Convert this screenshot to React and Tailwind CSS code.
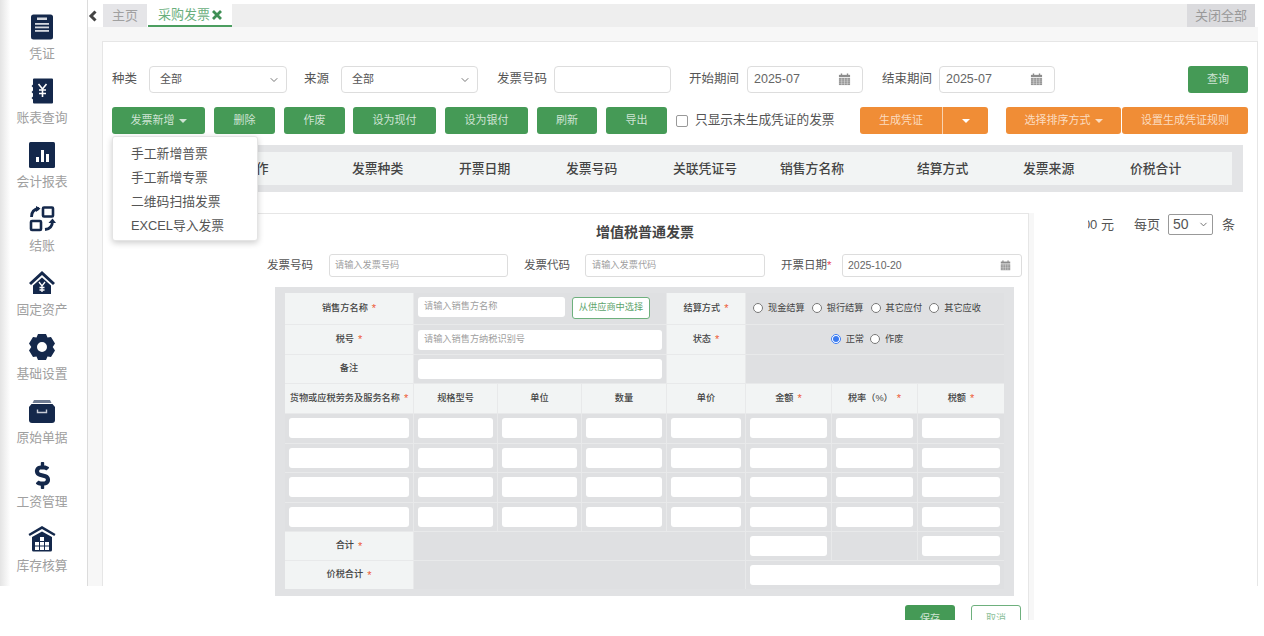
import { ChevronDown } from "lucide-react";
import { FaDollarSign } from "react-icons/fa";

const navy = "#14284b";

const VoucherIcon = () => (
  <svg width="28" height="28" viewBox="0 0 28 28">
    <rect x="3" y="1.500" width="22" height="25" rx="2.500" fill={navy} />
    <rect x="9" y="4.500" width="10" height="2.500" fill="#d5d9e0" />
    <rect x="7" y="10" width="14" height="1.800" fill="#d5d9e0" />
    <rect x="7" y="13.500" width="14" height="1.800" fill="#d5d9e0" />
    <rect x="7" y="17" width="14" height="1.800" fill="#d5d9e0" />
  </svg>
);

const LedgerIcon = () => (
  <svg width="28" height="28" viewBox="0 0 28 28">
    <path d="M6 1.500h18a1 1 0 0 1 1 1v23a1 1 0 0 1-1 1H6a1 1 0 0 1-1-1v-3l-1.500-1.500L5 19.500v-3l-1.500-1.500L5 13.500v-3L3.500 9 5 7.500v-5a1 1 0 0 1 1-1z" fill={navy} />
    <path d="M10.500 7l4 5 4-5M14.500 12v8M11 13h7M11 16.500h7" stroke="#fff" strokeWidth="1.600" fill="none" />
  </svg>
);

const ReportIcon = () => (
  <svg width="28" height="28" viewBox="0 0 28 28">
    <rect x="1" y="1" width="26" height="26" rx="1.500" fill={navy} />
    <rect x="8" y="16" width="3" height="5" fill="#fff" />
    <rect x="13" y="9" width="3" height="12" fill="#fff" />
    <rect x="18" y="13" width="3" height="8" fill="#fff" />
  </svg>
);

const CloseIcon = () => (
  <svg width="28" height="28" viewBox="0 0 28 28">
    <rect x="15" y="2.500" width="10" height="9" rx="1" fill="none" stroke={navy} strokeWidth="2.600" />
    <rect x="3" y="16" width="10" height="9" rx="1" fill="none" stroke={navy} strokeWidth="2.600" />
    <path d="M11 3.500C6 4 3.500 6.500 3.500 12" fill="none" stroke={navy} strokeWidth="2.800" />
    <path d="M8 1l4.500 2.500L8 7z" fill={navy} />
    <path d="M17 24.500c5-.5 7.500-3 7.500-8.500" fill="none" stroke={navy} strokeWidth="2.800" />
    <path d="M20.500 18L24.500 13.500 28 18z" fill={navy} />
  </svg>
);

const AssetIcon = () => (
  <svg width="28" height="28" viewBox="0 0 28 28">
    <path d="M14 2L1 14l2 2L14 6l11 10 2-2z" fill={navy} />
    <path d="M14 8.500L5 16.500V25h18v-8.500z" fill={navy} />
    <path d="M11 13l3 4 3-4M14 17v6M11.500 18.500h5M11.500 21h5" stroke="#fff" strokeWidth="1.300" fill="none" />
  </svg>
);

const GearIcon = () => (
  <svg width="28" height="28" viewBox="0 0 28 28">
    <path fillRule="evenodd" fill={navy} d="M10 1h8l1.500 3.500 3.500-.5 4 6.500-2.300 3.500 2.300 3.500-4 6.500-3.500-.5L18 27h-8l-1.500-3.500-3.500.5-4-6.500L3.300 14 1 10.500 5 4l3.500.5zM14 9a5 5 0 1 0 0 10 5 5 0 0 0 0-10z" />
  </svg>
);

const ArchiveIcon = () => (
  <svg width="28" height="28" viewBox="0 0 28 28">
    <path d="M6 3h16l1.500 3h-19z" fill="#6f7c93" />
    <path d="M3.500 7h21l2.500 3v13a3 3 0 0 1-3 3H4a3 3 0 0 1-3-3V10z" fill={navy} />
    <path d="M9.500 12.500v3h9v-3" fill="none" stroke="#c7ccd6" strokeWidth="1.400" />
  </svg>
);

const WarehouseIcon = () => (
  <svg width="28" height="28" viewBox="0 0 28 28">
    <path d="M14 1L0.500 9l1.200 2L14 4l12.300 7 1.200-2z" fill={navy} />
    <path d="M14 6.500L4 12v13a1.500 1.500 0 0 0 1.500 1.500h17A1.500 1.500 0 0 0 24 25V12z" fill={navy} />
    <rect x="12" y="12" width="4" height="4" fill="#fff" />
    <rect x="7" y="17" width="4" height="3.500" fill="#fff" />
    <rect x="12" y="17" width="4" height="3.500" fill="#fff" />
    <rect x="17" y="17" width="4" height="3.500" fill="#fff" />
    <rect x="7" y="21.500" width="4" height="3.500" fill="#fff" />
    <rect x="12" y="21.500" width="4" height="3.500" fill="#fff" />
    <rect x="17" y="21.500" width="4" height="3.500" fill="#fff" />
  </svg>
);

const DollarIcon = () => <FaDollarSign size={27} color={navy} />;

const CalendarIcon = ({ size = 13 }) => (
  <svg width={size} height={size} viewBox="0 0 14 14" fill="#8d8d8d">
    <rect x="3" y="0.500" width="1.500" height="2.500" />
    <rect x="9.500" y="0.500" width="1.500" height="2.500" />
    <rect x="1" y="2" width="12" height="2.500" />
    <path d="M1 5.500h12V13H1z" />
    <path d="M1 7.500h12M1 9.500h12M1 11.500h12M4 5.500V13M7 5.500V13M10 5.500V13" stroke="#fff" strokeWidth="0.400" />
  </svg>
);

const Caret = () => <span className="inline-block h-0 w-0 border-x-[4px] border-t-[4px] border-x-transparent border-t-current" />;

const sideItems = [
  { label: "凭证", Icon: VoucherIcon },
  { label: "账表查询", Icon: LedgerIcon },
  { label: "会计报表", Icon: ReportIcon },
  { label: "结账", Icon: CloseIcon },
  { label: "固定资产", Icon: AssetIcon },
  { label: "基础设置", Icon: GearIcon },
  { label: "原始单据", Icon: ArchiveIcon },
  { label: "工资管理", Icon: DollarIcon },
  { label: "库存核算", Icon: WarehouseIcon },
];

const headCols = ["操作", "发票种类", "开票日期", "发票号码", "关联凭证号", "销售方名称", "结算方式", "发票来源", "价税合计"];

function Sidebar() {
  return (
    <aside className="w-[88px] shrink-0 border-r border-[#dcdcdc] bg-gradient-to-r from-[#e4e4e4] via-white via-[12%] to-white pr-[3px] pt-[13px]">
      {sideItems.map(({ label, Icon }) => (
        <div key={label} className="flex h-16 flex-col items-center">
          <div className="flex h-7 w-7 items-center justify-center">
            <Icon />
          </div>
          <span className="mt-[3px] text-[12.800px] leading-5 text-[#a0a0a0]">{label}</span>
        </div>
      ))}
    </aside>
  );
}

function GreenBtn({ className = "", children }) {
  return (
    <button className={`flex h-[27px] items-center justify-center gap-1 rounded-[3px] bg-[#459a56] text-[11px] text-[#cfe4d4] ${className}`}>
      {children}
    </button>
  );
}

function OrangeBtn({ className = "", children }) {
  return (
    <button className={`flex h-[27px] items-center justify-center gap-1 rounded-[3px] bg-[#f08d36] text-[11px] text-[#fbdcc0] ${className}`}>
      {children}
    </button>
  );
}

function Select({ className = "" }) {
  return (
    <div className={`flex h-[27px] items-center justify-between rounded-[4px] border border-[#dddddd] pl-[10px] pr-[6px] text-[11px] text-[#555] ${className}`}>
      全部
      <ChevronDown size={12} color="#777" />
    </div>
  );
}

function DateBox({ className = "", value }) {
  return (
    <div className={`flex h-[27px] items-center justify-between rounded-[4px] border border-[#dddddd] pl-[6px] pr-[11px] text-[12.500px] text-[#666] ${className}`}>
      {value}
      <CalendarIcon />
    </div>
  );
}

function Filters() {
  return (
    <div className="ml-[9px] mt-[24px] flex h-[27px] items-center text-[12.500px] text-[#555]">
      <span className="w-[37px]">种类</span>
      <Select className="w-[138px]" />
      <span className="ml-[17px] w-[37px]">来源</span>
      <Select className="w-[137px]" />
      <span className="ml-[19px] w-[57px]">发票号码</span>
      <div className="h-[27px] w-[117px] rounded-[4px] border border-[#dddddd]" />
      <span className="ml-[18px] w-[58px]">开始期间</span>
      <DateBox className="w-[116px]" value="2025-07" />
      <span className="ml-[19px] w-[57px]">结束期间</span>
      <DateBox className="w-[116px]" value="2025-07" />
      <GreenBtn className="ml-[133px] w-[60px]">查询</GreenBtn>
    </div>
  );
}

function Actions() {
  return (
    <div className="ml-[9px] mt-[14px] flex h-[27px] items-center">
      <GreenBtn className="w-[93px]">
        发票新增 <Caret />
      </GreenBtn>
      <GreenBtn className="ml-[9px] w-[61px]">删除</GreenBtn>
      <GreenBtn className="ml-[9px] w-[61px]">作废</GreenBtn>
      <GreenBtn className="ml-[8px] w-[83px]">设为现付</GreenBtn>
      <GreenBtn className="ml-[9px] w-[83px]">设为银付</GreenBtn>
      <GreenBtn className="ml-[9px] w-[60px]">刷新</GreenBtn>
      <GreenBtn className="ml-[9px] w-[61px]">导出</GreenBtn>
      <input type="checkbox" className="ml-[9px] h-3 w-3 appearance-none rounded-[2px] border border-[#999] bg-white" />
      <span className="ml-[7px] w-[165px] text-[12.700px] text-[#555]">只显示未生成凭证的发票</span>
      <div className="flex h-[27px] w-[128px] overflow-hidden rounded-[3px] bg-[#f08d36] text-[11px] text-[#fbdcc0]">
        <div className="flex w-[83px] items-center justify-center border-r border-[#f8d3b0]">生成凭证</div>
        <div className="flex flex-1 items-center justify-center text-white">
          <Caret />
        </div>
      </div>
      <OrangeBtn className="ml-[18px] w-[115px]">
        选择排序方式 <Caret />
      </OrangeBtn>
      <OrangeBtn className="ml-px w-[126px]">设置生成凭证规则</OrangeBtn>
    </div>
  );
}

function TableHead() {
  return (
    <div className="ml-[9px] mt-[11px] w-[1131px] bg-[#e3e4e6] py-[7px]">
      <div className="grid h-[33px] w-[1120px] grid-cols-[109px_107px_107px_107px_107px_137px_106px_107px_1fr] items-center bg-[#f2f4f4] pl-[131px] text-[12.800px] font-medium text-[#444]">
        {headCols.map((c) => (
          <span key={c}>{c}</span>
        ))}
      </div>
    </div>
  );
}

function Pager() {
  return (
    <div className="mr-[22px] mt-[22px] flex h-[21px] items-center justify-end text-[13px] text-[#555]">
      <span>0.00 元</span>
      <span className="ml-[20px]">每页</span>
      <div className="ml-[8px] flex h-[21px] w-[45px] items-center justify-between rounded-[2px] border border-[#999] pl-[4px] pr-[3px] text-[14px]">
        50
        <ChevronDown size={11} color="#666" />
      </div>
      <span className="ml-[9px]">条</span>
    </div>
  );
}

function AddMenu() {
  return (
    <div className="absolute left-[112px] top-[136px] z-20 h-[105px] w-[146px] rounded-[3px] border border-[#e4e4e4] bg-white py-[5px] pl-[18px] text-[12.800px] leading-6 text-[#555] shadow-[0_2px_6px_rgba(0,0,0,0.2)]">
      <div>手工新增普票</div>
      <div>手工新增专票</div>
      <div>二维码扫描发票</div>
      <div>EXCEL导入发票</div>
    </div>
  );
}

const Req = () => <span className="ml-[4px] text-[11px] leading-none text-[#ee5a36]">*</span>;

function Label({ className = "", req, children }) {
  return (
    <div className={`flex items-center justify-center bg-[#f2f4f4] text-[9.200px] font-medium text-[#444] ${className}`}>
      {children}
      {req && <Req />}
    </div>
  );
}

function Gray({ className = "", children }) {
  return <div className={`flex items-center bg-[#dfe0e2] ${className}`}>{children}</div>;
}

function Field({ className = "", placeholder }) {
  return (
    <div className={`flex h-[20px] items-center rounded-[3px] bg-white pl-[6px] text-[9.200px] text-[#a0a0a0] ${className}`}>{placeholder}</div>
  );
}

function Radio({ name, label, checked }) {
  return (
    <label className="flex items-center gap-[5px] text-[9.200px] text-[#444]">
      <input type="radio" name={name} defaultChecked={checked} className="m-0 h-[10px] w-[10px] accent-[#3b7bf0]" />
      {label}
    </label>
  );
}

function InvoiceForm() {
  const goods = ["货物或应税劳务及服务名称", "规格型号", "单位", "数量", "单价", "金额", "税率（%）", "税额"];
  return (
    <div className="absolute left-[258px] top-[192px] z-10 h-[428px] w-[830px] overflow-hidden bg-white pt-[21px]">
      <div className="flex h-full">
        <div className="w-[771px] border-r border-t border-[#e6e6e6] bg-white">
          <div className="pl-[9px]">
            <h2 className="mt-[8px] h-[20px] pr-[5px] text-center text-[14px] font-semibold leading-5 text-[#444]">增值税普通发票</h2>
            <div className="mt-[12px] flex h-[23px] items-center text-[11.500px] text-[#555]">
              <span className="w-[62px]">发票号码</span>
              <div className="flex h-[23px] w-[179px] items-center rounded-[3px] border border-[#dddddd] pl-[5px] text-[9.200px] text-[#a0a0a0]">请输入发票号码</div>
              <span className="ml-[16px] w-[61px]">发票代码</span>
              <div className="flex h-[23px] w-[180px] items-center rounded-[3px] border border-[#dddddd] pl-[6px] text-[9.200px] text-[#a0a0a0]">请输入发票代码</div>
              <span className="ml-[16px] w-[61px]">
                开票日期<span className="text-[#e8465a]">*</span>
              </span>
              <div className="flex h-[23px] w-[180px] items-center justify-between rounded-[3px] border border-[#dddddd] pl-[5px] pr-[10px] text-[10.500px] text-[#666]">
                2025-10-20
                <CalendarIcon size={11} />
              </div>
            </div>
          </div>
          <div className="ml-[17px] mt-[10px] w-[739px] bg-[#e1e2e4] px-[10px] pb-[7px] pt-[6px]">
            <div className="grid grid-cols-[128px_83px_83px_84px_78px_85px_85px_86px] grid-rows-[31px_29px_28px_29px_repeat(4,28.5px)_28px_28px] gap-px bg-[#e8e9ea]">
              <Label req>销售方名称</Label>
              <Gray className="col-span-3 items-start pl-[4px] pt-[4px]">
                <Field className="w-[147px]" placeholder="请输入销售方名称" />
                <div className="ml-[7px] flex h-[22px] w-[78px] items-center justify-center rounded-[3px] border border-[#6eb07d] bg-white text-[9.200px] text-[#5da46d]">从供应商中选择</div>
              </Gray>
              <Label req>结算方式</Label>
              <Gray className="col-span-3 gap-[7px] pl-[7px]">
                <Radio name="pay" label="现金结算" />
                <Radio name="pay" label="银行结算" />
                <Radio name="pay" label="其它应付" />
                <Radio name="pay" label="其它应收" />
              </Gray>

              <Label req>税号</Label>
              <Gray className="col-span-3 px-[4px]">
                <Field className="w-full" placeholder="请输入销售方纳税识别号" />
              </Gray>
              <Label req>状态</Label>
              <Gray className="col-span-3 justify-center gap-[6px] pr-[16px]">
                <Radio name="state" label="正常" checked />
                <Radio name="state" label="作废" />
              </Gray>

              <Label>备注</Label>
              <Gray className="col-span-3 px-[4px]">
                <Field className="w-full" />
              </Gray>
              <Label />
              <Gray className="col-span-3" />

              {goods.map((g, i) => (
                <Label key={g} req={i === 0 || i >= 5}>
                  {g}
                </Label>
              ))}

              {[0, 1, 2, 3].map((r) =>
                goods.map((g) => (
                  <Gray key={`${r}-${g}`} className="px-[4px]">
                    <Field className="w-full" />
                  </Gray>
                ))
              )}

              <Label req>合计</Label>
              <Gray className="col-span-4" />
              <Gray className="px-[4px]">
                <Field className="w-full" />
              </Gray>
              <Gray />
              <Gray className="px-[4px]">
                <Field className="w-full" />
              </Gray>

              <Label req>价税合计</Label>
              <Gray className="col-span-4" />
              <Gray className="col-span-3 px-[4px]">
                <Field className="w-full" />
              </Gray>
            </div>
          </div>
          <div className="mr-[7px] mt-[9px] flex justify-end gap-[16px]">
            <button className="h-[27px] w-[50px] rounded-[3px] bg-[#459a56] text-[10px] text-[#cfe4d4]">保存</button>
            <button className="h-[27px] w-[50px] rounded-[3px] border border-[#6eb07d] bg-white text-[10px] text-[#8cc09a]">取消</button>
          </div>
        </div>
        <div className="w-[5px] bg-[#f7f7f7]" />
      </div>
    </div>
  );
}

export default function App() {
  return (
    <div className="relative h-[636px] w-[1264px] overflow-hidden bg-white font-['Liberation_Sans','Noto_Sans_CJK_SC',sans-serif]">
      <div className="flex h-[586px]">
        <Sidebar />
        <main className="flex min-w-0 flex-1 flex-col pt-[4px]">
          <div className="flex h-[23px] text-[13px] text-[#a0a0a0]">
            <div className="flex w-[15px] items-center justify-start bg-white">
              <svg width="10" height="12" viewBox="0 0 10 12" fill="none" stroke="#444" strokeWidth="3">
                <path d="M7.500 1.500L3 6l4.500 4.500" />
              </svg>
            </div>
            <div className="flex w-[44px] items-center justify-center bg-[#e5e5e8]">主页</div>
            <div className="ml-px flex w-[84px] items-center justify-center gap-[2px] border-b-2 border-[#4c9e60] text-[#6aaf7d]">
              采购发票
              <svg width="10" height="10" viewBox="0 0 10 10" fill="none" stroke="#3f8f55" strokeWidth="2.800">
                <path d="M1 1l8 8M9 1l-8 8" />
              </svg>
            </div>
            <div className="flex-1 bg-[#eeeeee]" />
            <div className="mr-[9px] flex w-[68px] items-center justify-center bg-[#dbdbde] text-[#999]">关闭全部</div>
          </div>
          <div className="mr-[6px] flex flex-1 flex-col bg-[#f7f7f7] pl-[14px] pt-[14px]">
            <section className="flex-1 border-x border-t border-[#e6e6e6] bg-white">
              <Filters />
              <Actions />
              <TableHead />
              <Pager />
            </section>
          </div>
        </main>
      </div>
      <AddMenu />
      <InvoiceForm />
    </div>
  );
}
